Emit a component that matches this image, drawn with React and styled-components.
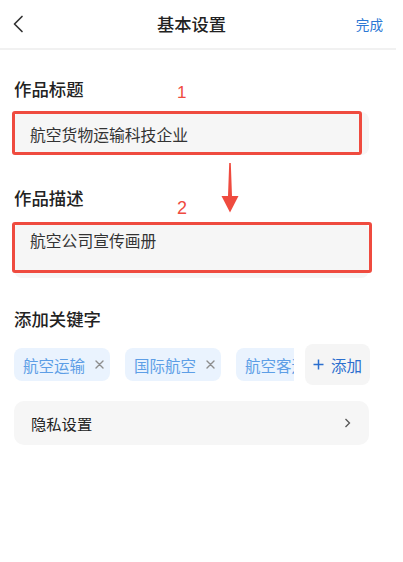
import React from "react";
import styled, { createGlobalStyle } from "styled-components";

const Global = createGlobalStyle`
  html, body { margin: 0; padding: 0; background: #fff; }
  body { font-family: "Noto Sans CJK SC", "Noto Sans", sans-serif; color: #222; }
  * { box-sizing: border-box; }
`;

const Page = styled.div`
  width: 403px;
  height: 562px;
  background: #fff;
  overflow: hidden;
`;

const Header = styled.header`
  width: 396px;
  height: 50px;
  display: grid;
  grid-template-columns: 157px auto 1fr;
  align-items: center;
  border-bottom: 2px solid #f1f1f1;
`;

const Back = styled.button`
  border: 0;
  background: none;
  padding: 0 0 0 12px;
  display: flex;
  align-items: center;
  height: 48px;
  cursor: pointer;
`;

const Title = styled.h1`
  margin: 0;
  font-size: 17.3px;
  font-weight: 500;
  color: #222;
  line-height: 24px;
`;

const Done = styled.button`
  justify-self: end;
  border: 0;
  background: none;
  padding: 0 13px 0 0;
  font: inherit;
  font-size: 13.6px;
  color: #2c78d4;
  line-height: 20px;
`;

const Main = styled.main`
  padding: 27px 0 0 14px;
  display: flex;
  flex-direction: column;
`;

const Section = styled.section`
  position: relative;
  width: 355px;
  display: flex;
  flex-direction: column;
  gap: ${(p) => p.$gap || 12}px;
  margin-top: ${(p) => p.$top || 0}px;
`;

const Label = styled.h2`
  margin: 0;
  font-size: 17.4px;
  font-weight: 500;
  line-height: 24px;
  color: #222;
`;

const Mark = styled.span`
  position: absolute;
  left: ${(p) => p.$x}px;
  top: ${(p) => p.$y}px;
  font-family: "Liberation Sans", Arial, sans-serif;
  font-size: ${(p) => p.$size || 18}px;
  line-height: 20px;
  color: #ef4b3f;
`;

const Arrow = styled.svg`
  position: absolute;
  left: 207px;
  top: -23px;
`;

const FieldWrap = styled.div`
  position: relative;
`;

const Field = styled.div`
  background: #f6f6f6;
  border-radius: 8px;
  height: ${(p) => p.$h}px;
  padding: ${(p) => (p.$multi ? "7px 16px 0" : "0 16px")};
  display: flex;
  align-items: ${(p) => (p.$multi ? "flex-start" : "center")};
  font-size: 15.8px;
  line-height: 22px;
  color: #333;
  padding-top: ${(p) => (p.$multi ? "7px" : "3px")};
`;

const Highlight = styled.div`
  position: absolute;
  top: -1px;
  left: -2px;
  right: ${(p) => p.$r}px;
  bottom: ${(p) => p.$b}px;
  border: 3px solid #ef4b3f;
  border-radius: 3px;
  pointer-events: none;
`;

const TagRow = styled.div`
  display: flex;
  align-items: center;
  height: 41px;
  gap: 11px;
`;

const TagScroll = styled.div`
  width: 280px;
  overflow: hidden;
  display: flex;
  gap: 15px;
  flex: none;
`;

const Tag = styled.div`
  flex: none;
  width: 96px;
  height: 33px;
  border-radius: 8px;
  background: #eaf3fe;
  display: flex;
  align-items: center;
  padding: 0 0 0 9px;
  gap: 10px;
  font-size: 15.5px;
  color: #5d9ee6;
  white-space: nowrap;
`;

const Close = styled.svg`
  flex: none;
`;

const AddButton = styled.button`
  flex: none;
  width: 65px;
  height: 41px;
  border: 0;
  border-radius: 8px;
  background: #f5f5f5;
  display: flex;
  align-items: center;
  justify-content: center;
  gap: 7px;
  font: inherit;
  font-size: 15.5px;
  color: #2b6fcf;
  padding: 0;
`;

const Row = styled.div`
  margin-top: 16px;
  width: 355px;
  height: 44px;
  border-radius: 10px;
  background: #f6f6f6;
  display: flex;
  align-items: center;
  justify-content: space-between;
  padding: 0 18px 0 17px;
  font-size: 15.3px;
  color: #222;
`;

const tags = ["航空运输", "国际航空", "航空客运"];

export default function App() {
  return (
    <>
      <Global />
      <Page>
        <Header>
          <Back aria-label="返回">
            <svg width="12" height="18" viewBox="0 0 12 18">
              <path d="M10 1.5 L2.5 9 L10 16.5" fill="none" stroke="#333" strokeWidth="1.7" strokeLinecap="round" strokeLinejoin="round" />
            </svg>
          </Back>
          <Title>基本设置</Title>
          <Done>完成</Done>
        </Header>
        <Main>
          <Section $gap={11}>
            <Label>作品标题</Label>
            <Mark $x={163} $y={6} $size={17}>1</Mark>
            <FieldWrap>
              <Field $h={43}>航空货物运输科技企业</Field>
              <Highlight $r={7} $b={0} />
            </FieldWrap>
          </Section>
          <Section $top={31} $gap={13}>
            <Arrow width="18" height="50" viewBox="0 0 18 50">
              <path d="M8.2 0 H9.8 L11 33 H17.5 L9 49.5 L0.5 33 H7 Z" fill="#ef4b3f" />
            </Arrow>
            <Label>作品描述</Label>
            <Mark $x={163} $y={12}>2</Mark>
            <FieldWrap>
              <Field $h={55} $multi>航空公司宣传画册</Field>
              <Highlight $r={-3} $b={5} />
            </FieldWrap>
          </Section>
          <Section $top={29} $gap={13}>
            <Label>添加关键字</Label>
            <TagRow>
              <TagScroll>
                {tags.map((t) => (
                  <Tag key={t}>
                    {t}
                    <Close width="9" height="9" viewBox="0 0 9 9">
                      <path d="M1 1 L8 8 M8 1 L1 8" stroke="#8e8e8e" strokeWidth="1.4" strokeLinecap="round" />
                    </Close>
                  </Tag>
                ))}
              </TagScroll>
              <AddButton>
                <svg width="11" height="11" viewBox="0 0 11 11">
                  <path d="M5.5 0.5 V10.5 M0.5 5.5 H10.5" stroke="#2b6fcf" strokeWidth="1.5" />
                </svg>
                添加
              </AddButton>
            </TagRow>
          </Section>
          <Row>
            隐私设置
            <svg width="7" height="10" viewBox="0 0 7 10">
              <path d="M1.5 1 L5.5 5 L1.5 9" fill="none" stroke="#555" strokeWidth="1.3" />
            </svg>
          </Row>
        </Main>
      </Page>
    </>
  );
}
